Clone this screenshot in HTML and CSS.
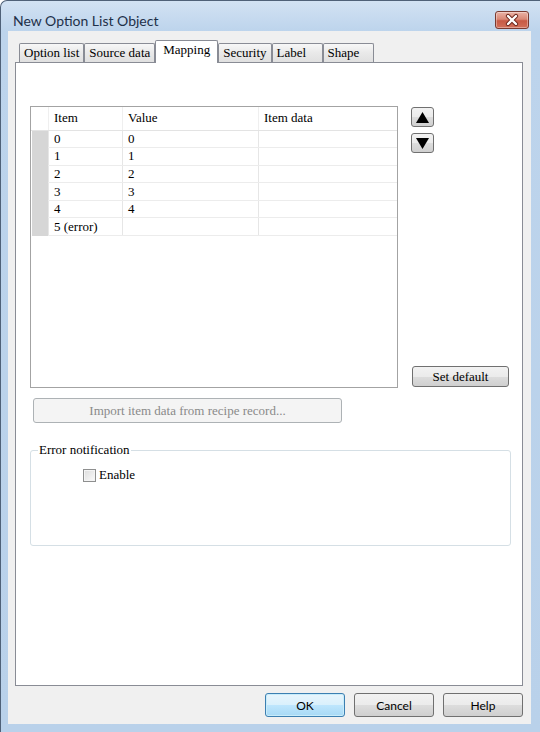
FILE: index.html
```html
<!DOCTYPE html>
<html lang="en">
<head>
    <meta charset="UTF-8">
    <meta name="viewport" content="width=device-width, initial-scale=1.0">
    <title>New Option List Object</title>
    <link rel="stylesheet" href="styles.css">
</head>
<body>
    <div class="window">
        <div class="titlebar">
            <span class="title">New Option List Object</span>
            <button class="close-btn" aria-label="Close">
                <!-- white X with a dark outline, like the aero caption button -->
                <svg width="32" height="16" viewBox="0 0 32 16">
                    <path d="M12 4 L20 12 M20 4 L12 12" stroke="#6b2419" stroke-width="4.2" stroke-linecap="round"/>
                    <path d="M12 4 L20 12 M20 4 L12 12" stroke="#ffffff" stroke-width="2.4" stroke-linecap="round"/>
                </svg>
            </button>
        </div>

        <div class="client">
            <div class="tabs">
                <div class="tab">Option list</div>
                <div class="tab">Source data</div>
                <div class="tab tab-active">Mapping</div>
                <div class="tab">Security</div>
                <div class="tab">Label</div>
                <div class="tab">Shape</div>
            </div>

            <div class="panel">
                <div class="mapping-row">
                    <div class="listbox">
                        <table class="grid">
                            <colgroup>
                                <col class="col-sel">
                                <col class="col-item">
                                <col class="col-value">
                                <col>
                            </colgroup>
                            <thead>
                                <tr>
                                    <th class="corner"></th>
                                    <th>Item</th>
                                    <th>Value</th>
                                    <th>Item data</th>
                                </tr>
                            </thead>
                            <tbody>
                                <tr><td class="sel"></td><td>0</td><td>0</td><td></td></tr>
                                <tr><td class="sel"></td><td>1</td><td>1</td><td></td></tr>
                                <tr><td class="sel"></td><td>2</td><td>2</td><td></td></tr>
                                <tr><td class="sel"></td><td>3</td><td>3</td><td></td></tr>
                                <tr><td class="sel"></td><td>4</td><td>4</td><td></td></tr>
                                <tr><td class="sel"></td><td>5 (error)</td><td></td><td></td></tr>
                            </tbody>
                        </table>
                    </div>

                    <div class="side">
                        <div class="arrows">
                            <button class="btn arrow-btn" aria-label="Move up">
                                <svg width="13" height="11" viewBox="0 0 13 11"><polygon points="6.5,0 13,11 0,11" fill="#000"/></svg>
                            </button>
                            <button class="btn arrow-btn" aria-label="Move down">
                                <svg width="13" height="11" viewBox="0 0 13 11"><polygon points="0,0 13,0 6.5,11" fill="#000"/></svg>
                            </button>
                        </div>
                        <button class="btn set-default">Set default</button>
                    </div>
                </div>

                <button class="btn import-btn" disabled>Import item data from recipe record...</button>

                <fieldset class="group">
                    <legend>Error notification</legend>
                    <label class="check">
                        <span class="check-box"></span>
                        Enable
                    </label>
                </fieldset>
            </div>

            <div class="dialog-buttons">
                <button class="dlg-btn dlg-default">OK</button>
                <button class="dlg-btn">Cancel</button>
                <button class="dlg-btn">Help</button>
            </div>
        </div>
    </div>
</body>
</html>
```

FILE: styles.css
```css
* {
    box-sizing: border-box;
}
body {
    margin: 0;
    font-family: "Liberation Serif", serif;
    font-size: 13px;
    color: #000;
    background: #fff;
}
button {
    font-family: inherit;
    font-size: inherit;
    color: inherit;
    padding: 0;
    margin: 0;
}

/* window frame */
.window {
    width: 540px;
    height: 732px;
    display: flex;
    flex-direction: column;
    background: linear-gradient(#d2e2f3, #bdd4ec 30px, #b9d1ea);
    border-top: 1px solid #4f6178;
    border-left: 1px solid #4f6178;
    border-radius: 7px 0 0 0;
}
.titlebar {
    height: 30px;
    display: flex;
    align-items: center;
    padding: 8px 11px 0 12px;
}
.title {
    font-family: Lato, "Liberation Sans", sans-serif;
    font-size: 14px;
    color: #1e3049;
}
.close-btn {
    margin-left: auto;
    width: 34px;
    height: 18px;
    display: flex;
    align-items: center;
    justify-content: center;
    border: 1px solid #7a3a30;
    border-radius: 3px;
    background: linear-gradient(#eab3a6, #d98876 45%, #c75a45 55%, #d2705a);
    box-shadow: inset 0 0 0 1px rgba(255, 255, 255, 0.35);
}

/* dialog body */
.client {
    flex: 1;
    display: flex;
    flex-direction: column;
    margin: 0 9px 8px 7px;
    padding: 9px 8px 7px 7px;
    background: #f0f0f0;
}

/* tab strip */
.tabs {
    height: 22px;
    display: flex;
    align-items: flex-end;
    padding-left: 4px;
}
.tab {
    height: 19px;
    line-height: 18px;
    padding: 0 4px;
    min-width: 51px;
    border: 1px solid #898c95;
    border-bottom: none;
    border-radius: 2px 2px 0 0;
    background: linear-gradient(#f7f7f7, #e9e9e9 50%, #e0e0e0);
}
.tab-active {
    position: relative;
    z-index: 1;
    height: 23px;
    line-height: 18px;
    margin-bottom: -1px;
    padding: 0 7px;
    background: #fff;
}

.panel {
    flex: 1;
    border: 1px solid #898c95;
    background: #fff;
    padding: 43px 0 0 14px;
}

/* option table and its buttons */
.mapping-row {
    display: flex;
    gap: 13px;
}
.listbox {
    width: 368px;
    height: 282px;
    border: 1px solid #a3a3a3;
    background: #fff;
}
.grid {
    width: 100%;
    border-collapse: collapse;
    table-layout: fixed;
}
.col-sel {
    width: 17px;
}
.col-item {
    width: 74px;
}
.col-value {
    width: 136px;
}
.grid th {
    height: 23px;
    padding: 0 5px;
    font-weight: normal;
    text-align: left;
    border-bottom: 1px solid #e3e3e3;
    border-left: 1px solid #efefef;
}
.grid th.corner {
    border-left: none;
}
.grid td {
    height: 17.6px;
    padding: 0 5px;
    line-height: 16px;
    border-bottom: 1px solid #ececec;
    border-left: 1px solid #e6e6e6;
}
.grid td.sel {
    border: none;
    border-left: 1px solid #fff;
    background: #d6d6d6;
}

.side {
    width: 98px;
    display: flex;
    flex-direction: column;
    justify-content: space-between;
    align-items: flex-start;
}
.arrows {
    display: flex;
    flex-direction: column;
    gap: 6px;
    margin-top: 1px;
}
.btn {
    border: 1px solid #707070;
    border-radius: 3px;
    background: linear-gradient(#f2f2f2, #ebebeb 50%, #dddddd 50%, #cfcfcf);
    cursor: pointer;
}
.arrow-btn {
    width: 23px;
    height: 20px;
    display: flex;
    align-items: center;
    justify-content: center;
}
.set-default {
    width: 97px;
    height: 21px;
    margin: 0 0 1px 1px;
}
.import-btn {
    display: block;
    width: 309px;
    height: 25px;
    margin: 10px 0 0 3px;
}
.import-btn:disabled {
    border-color: #adb2b5;
    background: #f4f4f4;
    color: #8a8a8a;
    cursor: default;
}

/* error notification group */
.group {
    width: 481px;
    height: 104px;
    margin: 19px 0 0 0;
    padding: 0;
    border: 1px solid #d5dfe5;
    border-radius: 3px;
}
.group legend {
    margin-left: 7px;
    padding: 0 1px;
}
.check {
    display: flex;
    align-items: center;
    gap: 3px;
    margin: 9px 0 0 52px;
}
.check-box {
    width: 13px;
    height: 13px;
    border: 1px solid #8e8f8f;
    background: linear-gradient(135deg, #dcdcdc, #fbfbfb);
    box-shadow: inset 0 0 0 1px #f4f4f4;
}

/* OK / Cancel / Help */
.dialog-buttons {
    display: flex;
    justify-content: flex-end;
    gap: 9px;
    margin-top: 7px;
}
.dlg-btn {
    width: 80px;
    height: 24px;
    font-family: Lato, "Liberation Sans", sans-serif;
    font-size: 12px;
    border: 1px solid #707070;
    border-radius: 3px;
    background: linear-gradient(#f2f2f2, #ebebeb 50%, #dddddd 50%, #cfcfcf);
    cursor: pointer;
}
.dlg-default {
    border-color: #3c7fb1;
    background: linear-gradient(#e8f5fc, #d9f0fc 50%, #bee6fd 50%, #a7d9f5);
    box-shadow: inset 0 0 0 1px #c8ecfa;
}
```
